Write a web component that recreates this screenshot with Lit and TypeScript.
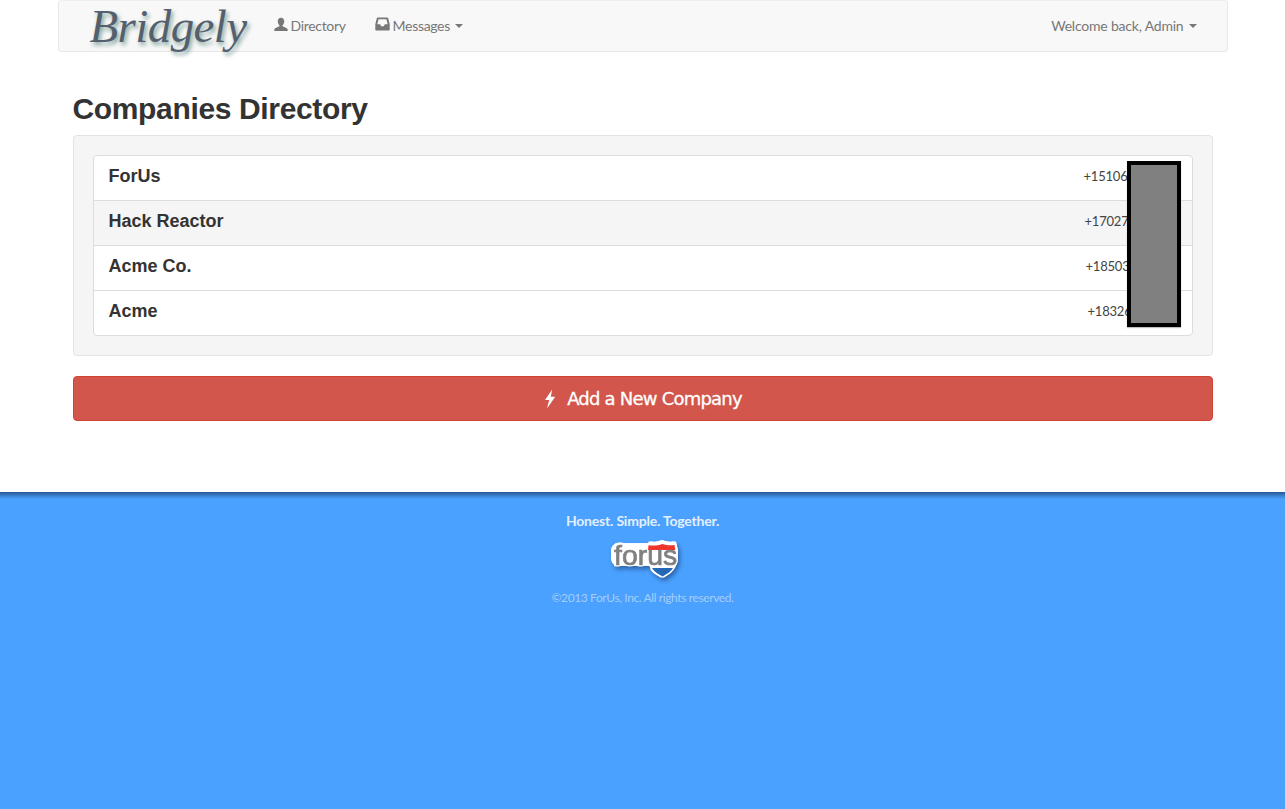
import { LitElement, css, html, svg } from "lit";
import { customElement } from "lit/decorators.js";

interface ICompany {
  name: string;
  phone: string;
  offset: number;
}

// offset = how far the number starts from the redaction box, the numbers are not aligned
const companies: Array<ICompany> = [
  { name: "ForUs", phone: "+15106", offset: 95 },
  { name: "Hack Reactor", phone: "+17027", offset: 94 },
  { name: "Acme Co.", phone: "+18503", offset: 93 },
  { name: "Acme", phone: "+18326", offset: 91 },
];

const userIcon = svg`<svg class="glyph" viewBox="0.3 0.3 13.4 13.4" width="14" height="15">
  <path fill="currentColor" d="M7 0.6c2 0 3.1 1.5 3.1 3.4 0 1.5-.7 3-1.500 3.700-.3.3-.2 1 .3 1.200 1.800.7 3.900 1.400 4.300 2.500.2.6.2 1.200.2 1.800H.6c0-.6 0-1.200.2-1.800.4-1.100 2.500-1.800 4.300-2.500.5-.2.6-.9.3-1.200C4.600 7 3.900 5.500 3.900 4 3.900 2.100 5 .6 7 .6z"/>
</svg>`;

const inboxIcon = svg`<svg class="glyph" viewBox="0 0 15 14" width="15" height="14">
  <path fill="currentColor" fill-rule="evenodd" d="M2.800.5h9.400c.5 0 .8.300 1 .7l1.500 6v5.300c0 .6-.4 1-1 1H1.300c-.6 0-1-.4-1-1V7.200l1.500-6c.2-.4.500-.7 1-.7zM3.600 2.200 2.300 7.300h2.900l.9 1.900h2.800l.9-1.900h2.900l-1.300-5.100z"/>
</svg>`;

const boltIcon = svg`<svg class="bolt" viewBox="0 0 12 20" width="12" height="20">
  <path fill="#fff" d="M8.200 0.500 1 11h4.200L3 19.500 11.200 7.800H6.800z"/>
</svg>`;

const forusLogo = svg`<svg class="logo" viewBox="0 0 72 42" width="72" height="42">
  <path fill="#fff" d="M39.500 4.500c3.500.8 8.500.6 12-1.200 4 1.800 8.500 2 12.500 1.200l1 4c1.500 5 1.500 11-.5 16-2 6-7.500 10-12.500 13-5-3-10-7-12-12H8c-3.500 0-6-3-6-7.500V14c0-5 3-7.500 6.500-7.500h31z"/>
  <path fill="#f0352b" d="M37.500 6.200c4.500.6 9.500.4 14-1.200 3.500 1.400 8 1.600 12 1l.8 5H37z"/>
  <path fill="#2467b5" d="M41 29h21c-2 3.500-6 6-10.500 8.500C47 35 43 32.500 41 29z"/>
  <text class="logo-text" x="3" y="26">forus</text>
</svg>`;

@customElement("app-root")
export class AppRoot extends LitElement {
  render() {
    return html`
      <div class="page">
        <nav class="navbar">
          <a class="brand">Bridgely</a>
          <ul class="nav">
            <li>${userIcon}Directory</li>
            <li>${inboxIcon}Messages<span class="caret"></span></li>
          </ul>
          <div class="welcome">Welcome back, Admin<span class="caret"></span></div>
        </nav>
        <main class="content">
          <h1>Companies Directory</h1>
          <div class="well">
            <div class="list">
              ${companies.map(
                (c) => html`
                  <div class="row">
                    <span class="name">${c.name}</span>
                    <span class="phone" style="width: ${c.offset}px">${c.phone}</span>
                  </div>
                `
              )}
            </div>
            <div class="redact"></div>
          </div>
          <button class="add">${boltIcon}Add a New Company</button>
        </main>
      </div>
      <footer class="footer">
        <div class="motto">Honest. Simple. Together.</div>
        ${forusLogo}
        <div class="copy">©2013 ForUs, Inc. All rights reserved.</div>
      </footer>
    `;
  }

  static styles = css`
    :host {
      display: flex;
      flex-direction: column;
      min-height: 809px;
      font-family: Lato, "Open Sans", sans-serif;
      color: #333;
      background: #fff;
    }
    .page {
      width: 1170px;
      height: 492px;
      margin: 0 auto;
      box-sizing: border-box;
    }
    .navbar {
      display: flex;
      align-items: center;
      height: 52px;
      box-sizing: border-box;
      background: #f8f8f8;
      border: 1px solid #e7e7e7;
      border-top-color: #eee;
      border-radius: 4px;
      padding: 0 30px 2px 31px;
      font-size: 14px;
      color: #777;
    }
    .brand {
      width: 184px;
      flex: none;
      margin-top: 2px;
      font-family: "Liberation Serif", serif;
      font-style: italic;
      font-size: 47px;
      line-height: 50px;
      letter-spacing: -0.6px;
      color: #55606f;
      text-shadow: 2px 3px 4px rgba(90, 135, 125, 0.75);
      white-space: nowrap;
    }
    .nav {
      display: flex;
      gap: 29px;
      list-style: none;
      margin: 0;
      padding: 0;
      letter-spacing: -0.32px;
    }
    .nav li {
      display: flex;
      align-items: center;
    }
    .glyph {
      margin-right: 3px;
      margin-top: -2px;
    }
    .welcome {
      display: flex;
      align-items: center;
      margin-left: auto;
      letter-spacing: -0.2px;
    }
    .caret {
      width: 0;
      height: 0;
      margin-left: 5px;
      margin-top: 2px;
      border-top: 4px solid #777;
      border-left: 4px solid transparent;
      border-right: 4px solid transparent;
    }
    .content {
      padding: 0 15px;
    }
    h1 {
      margin: 0;
      padding-top: 39px;
      height: 83px;
      box-sizing: border-box;
      font-family: "Liberation Sans", Arial, sans-serif;
      font-size: 30px;
      line-height: 36px;
      font-weight: 700;
      letter-spacing: -0.35px;
      color: #333;
    }
    .well {
      position: relative;
      padding: 19px;
      background: #f5f5f5;
      border: 1px solid #e3e3e3;
      border-radius: 4px;
    }
    .list {
      background: #fff;
      border: 1px solid #ddd;
      border-radius: 4px;
    }
    .row {
      display: flex;
      align-items: center;
      justify-content: space-between;
      height: 40px;
      padding: 0 15px 4px;
      border-top: 1px solid #ddd;
    }
    .row:first-child {
      border-top: none;
    }
    .row:nth-child(2) {
      background: #f5f5f5;
    }
    .name {
      font-family: "Liberation Sans", Arial, sans-serif;
      font-size: 18px;
      font-weight: 700;
      color: #333;
    }
    .phone {
      font-size: 13px;
      letter-spacing: -0.2px;
      margin-right: -2px;
      margin-top: -1px;
      color: #444;
    }
    .redact {
      position: absolute;
      left: 1053px;
      top: 25px;
      width: 46px;
      height: 158px;
      background: #808080;
      border: 4px solid #000;
      box-shadow: 0 1px 1px rgba(0, 0, 0, 0.25);
    }
    .add {
      display: flex;
      align-items: center;
      justify-content: center;
      gap: 11px;
      width: 100%;
      height: 45px;
      margin-top: 20px;
      padding: 0;
      background: #d2564b;
      border: 1px solid #d14233;
      border-radius: 4px;
      color: #fff;
      font-family: "DejaVu Sans", sans-serif;
      font-size: 18px;
      font-weight: 400;
      letter-spacing: -0.78px;
      -webkit-text-stroke: 0.3px #fff;
    }
    .bolt {
      margin-left: 1px;
    }
    .footer {
      flex: 1;
      display: flex;
      flex-direction: column;
      align-items: center;
      background: linear-gradient(rgba(25, 60, 105, 0.72), rgba(25, 60, 105, 0) 7px), #4aa1ff;
    }
    .motto {
      margin-top: 19px;
      height: 20px;
      font-size: 14px;
      line-height: 20px;
      font-weight: 700;
      letter-spacing: -0.2px;
      color: #e4effc;
    }
    .logo {
      margin-top: 8px;
      margin-left: 8px;
      overflow: visible;
      filter: drop-shadow(1.5px 0 0 #fff) drop-shadow(-1.5px 0 0 #fff) drop-shadow(0 1.5px 0 #fff)
        drop-shadow(0 -1.5px 0 #fff) drop-shadow(2px 3px 2px rgba(25, 55, 100, 0.55));
    }
    .logo-text {
      font-family: "Liberation Sans", sans-serif;
      font-size: 28.4px;
      fill: #808080;
      stroke: #808080;
      stroke-width: 0.7px;
    }
    .copy {
      margin-top: 9px;
      font-size: 12px;
      line-height: 16px;
      letter-spacing: -0.39px;
      color: #a3cdfb;
    }
  `;
}

declare global {
  interface HTMLElementTagNameMap {
    "app-root": AppRoot;
  }
}
